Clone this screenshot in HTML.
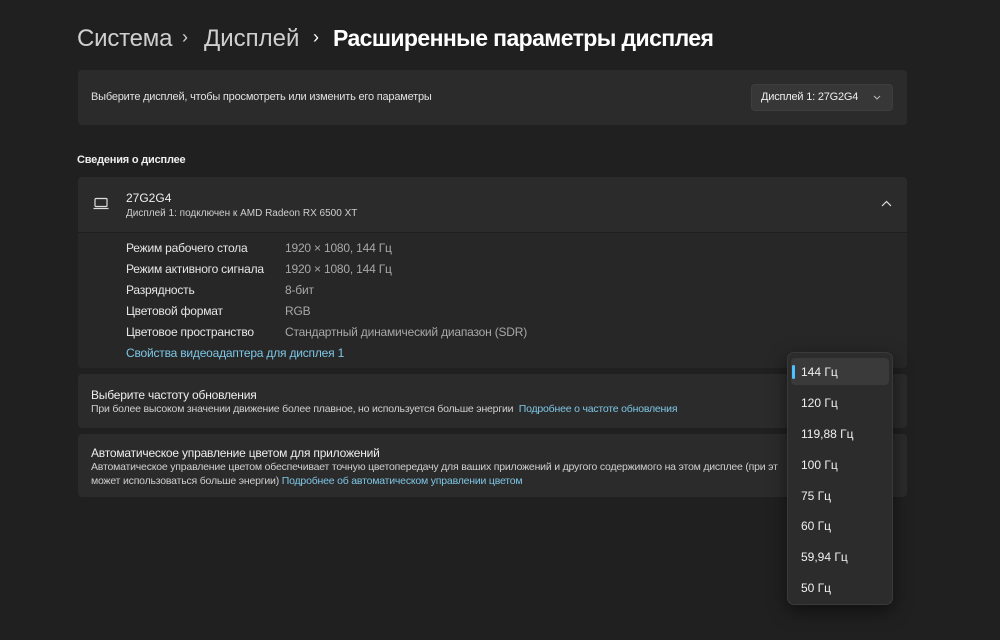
<!DOCTYPE html>
<html><head><meta charset="utf-8"><style>
*{margin:0;padding:0;box-sizing:border-box}
body{width:1000px;height:640px;background:#202020;font-family:"Liberation Sans",sans-serif;color:#fff;position:relative;overflow:hidden}
.a{position:absolute;white-space:nowrap}
.card{position:absolute;left:78px;width:829px;background:#2b2b2b;border-radius:4px}
.s{font-size:11px;color:#cfcfcf;letter-spacing:-0.2px}
.lab{font-size:12px;color:#e6e6e6;letter-spacing:-0.2px}
.l{color:#7dc6e6 !important}
.val{font-size:12px;color:#a8a8a8;letter-spacing:-0.2px}
.dd{position:absolute;left:787px;top:352px;width:106px;height:253px;background:#2c2c2c;border:1px solid #3a3a3a;border-radius:7px;box-shadow:0 6px 18px rgba(0,0,0,.5)}
.it{position:absolute;left:13px;font-size:12px;color:#f0f0f0}
</style></head><body>
<div class="a" style="left:77px;top:25px;font-size:24px;color:#cfcfcf;letter-spacing:-0.2px">Система</div>
<div class="a" style="left:182px;top:27px;font-size:18px;color:#cfcfcf">›</div>
<div class="a" style="left:204px;top:25px;font-size:24px;color:#cfcfcf;letter-spacing:0px">Дисплей</div>
<div class="a" style="left:313px;top:27px;font-size:18px;color:#fff">›</div>
<div class="a" style="left:333px;top:25px;font-size:23px;color:#fff;letter-spacing:-0.6px;font-weight:bold">Расширенные параметры дисплея</div>

<div class="card" style="top:70px;height:55px"></div>
<div class="a s" style="left:91px;top:91px;color:#e0e0e0">Выберите дисплей, чтобы просмотреть или изменить его параметры</div>
<div style="position:absolute;left:751px;top:84px;width:142px;height:27px;background:#373737;border-radius:4px;border:1px solid #3e3e3e"></div>
<div class="a s" style="left:761px;top:91px;color:#eee">Дисплей 1: 27G2G4</div>
<svg style="position:absolute;left:873px;top:95px" width="8" height="5" viewBox="0 0 8 5"><path d="M1 1L4 4L7 1" fill="none" stroke="#bbb" stroke-width="1"/></svg>

<div class="a" style="left:77px;top:154px;font-size:11px;font-weight:bold;color:#eee;letter-spacing:-0.2px">Сведения о дисплее</div>

<div class="card" style="top:177px;height:191px;background:#272727"></div>
<div class="card" style="top:177px;height:55px;border-radius:4px 4px 0 0"></div>
<div style="position:absolute;left:78px;top:232px;width:829px;height:1px;background:#1e1e1e"></div>
<svg style="position:absolute;left:93px;top:197px" width="16" height="14" viewBox="0 0 16 14"><rect x="2" y="1.5" width="12" height="8" rx="1" fill="none" stroke="#ddd" stroke-width="1.2"/><path d="M0.5 11.5h15" stroke="#ddd" stroke-width="1.2"/></svg>
<div class="a" style="left:126px;top:191px;font-size:12px;color:#eee">27G2G4</div>
<div class="a" style="left:126px;top:208px;font-size:10px;color:#cfcfcf">Дисплей 1: подключен к AMD Radeon RX 6500 XT</div>
<svg style="position:absolute;left:881px;top:200px" width="11" height="7" viewBox="0 0 11 7"><path d="M1 6L5.5 1.5L10 6" fill="none" stroke="#ddd" stroke-width="1.2"/></svg>

<div class="a lab" style="left:126px;top:241px">Режим рабочего стола</div><div class="a val" style="left:285px;top:241px">1920 × 1080, 144 Гц</div>
<div class="a lab" style="left:126px;top:262px">Режим активного сигнала</div><div class="a val" style="left:285px;top:262px">1920 × 1080, 144 Гц</div>
<div class="a lab" style="left:126px;top:283px">Разрядность</div><div class="a val" style="left:285px;top:283px">8-бит</div>
<div class="a lab" style="left:126px;top:304px">Цветовой формат</div><div class="a val" style="left:285px;top:304px">RGB</div>
<div class="a lab" style="left:126px;top:325px">Цветовое пространство</div><div class="a val" style="left:285px;top:325px">Стандартный динамический диапазон (SDR)</div>
<div class="a lab l" style="left:126px;top:346px">Свойства видеоадаптера для дисплея 1</div>

<div class="card" style="top:374px;height:54px"></div>
<div class="a" style="left:91px;top:388px;font-size:12px;color:#eee;letter-spacing:-0.2px">Выберите частоту обновления</div>
<div class="a s" style="left:91px;top:403px;font-size:10.5px">При более высоком значении движение более плавное, но используется больше энергии &nbsp;<span class="l">Подробнее о частоте обновления</span></div>

<div class="card" style="top:434px;height:63px"></div>
<div class="a" style="left:91px;top:446px;font-size:12px;color:#eee;letter-spacing:-0.2px">Автоматическое управление цветом для приложений</div>
<div class="a s" style="left:91px;top:461px;font-size:10.5px">Автоматическое управление цветом обеспечивает точную цветопередачу для ваших приложений и другого содержимого на этом дисплее (при эт</div>
<div class="a s" style="left:91px;top:475px;font-size:10.5px">может использоваться больше энергии) <span class="l">Подробнее об автоматическом управлении цветом</span></div>

<div class="dd">
<div style="position:absolute;left:3px;top:5px;width:98px;height:27px;background:#3a3a3a;border-radius:4px"></div>
<div style="position:absolute;left:4px;top:12px;width:3px;height:14px;background:#4cc2ff;border-radius:2px"></div>
<div class="it" style="top:12px">144 Гц</div>
<div class="it" style="top:43px">120 Гц</div>
<div class="it" style="top:74px">119,88 Гц</div>
<div class="it" style="top:105px">100 Гц</div>
<div class="it" style="top:136px">75 Гц</div>
<div class="it" style="top:166px">60 Гц</div>
<div class="it" style="top:197px">59,94 Гц</div>
<div class="it" style="top:228px">50 Гц</div>
</div>
</body></html>
